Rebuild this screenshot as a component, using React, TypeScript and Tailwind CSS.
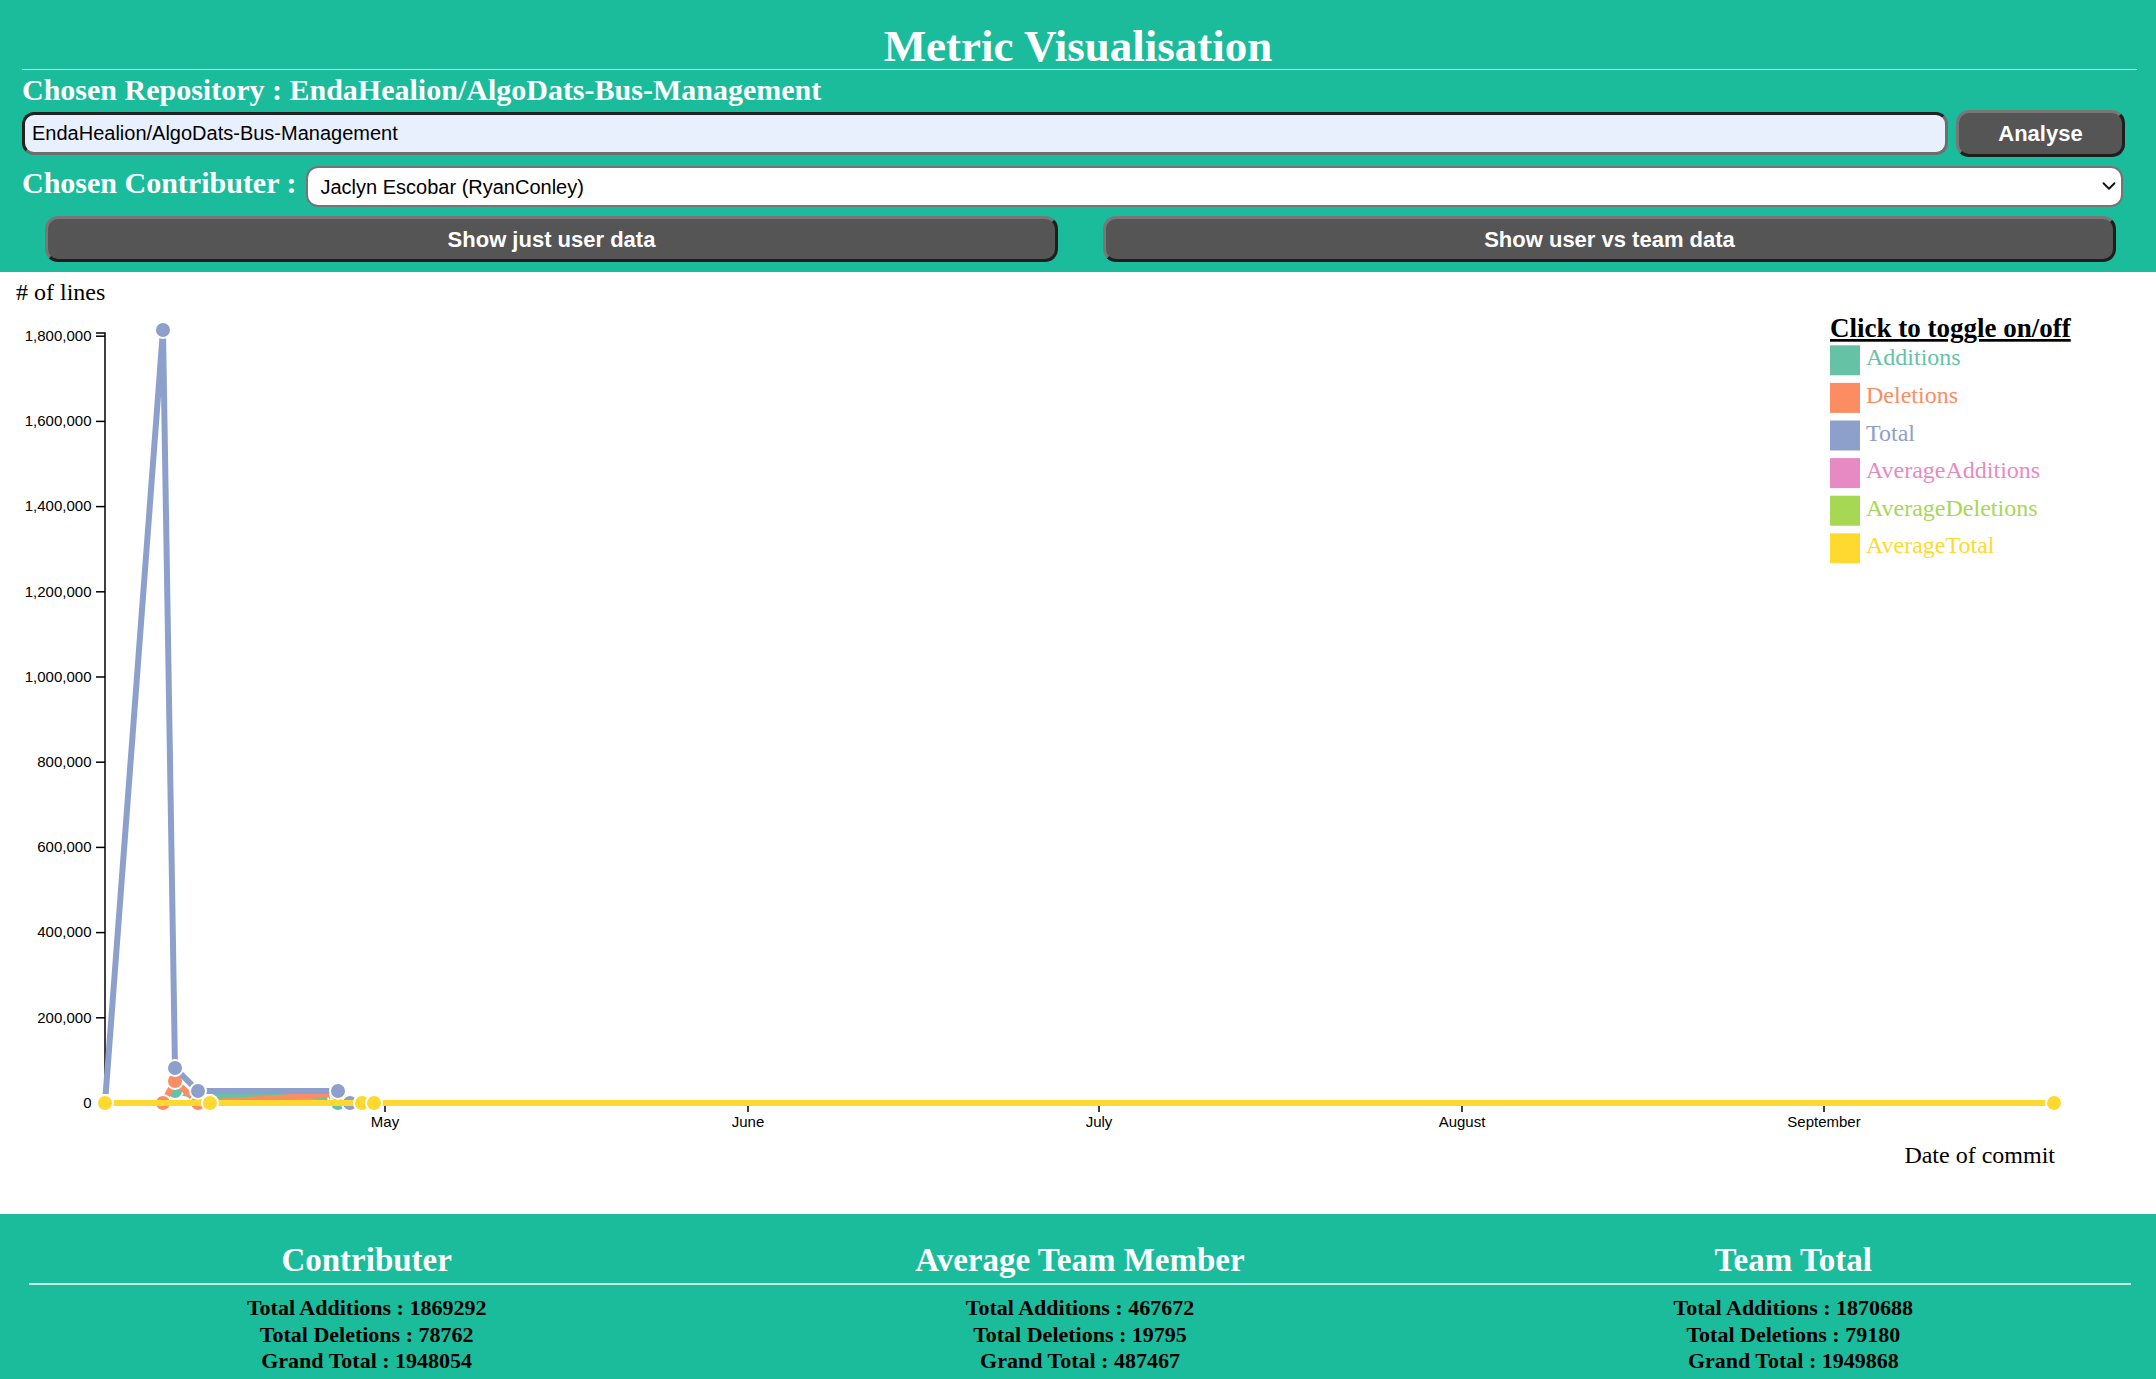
import { ChevronDown } from 'lucide-react';

type Pt = [number, number];

const Y0 = 831;
const STEP = 85.2;

const yTicks = ['0', '200,000', '400,000', '600,000', '800,000', '1,000,000', '1,200,000', '1,400,000', '1,600,000', '1,800,000'];

const xTicks: { label: string; x: number }[] = [
  { label: 'May', x: 385 },
  { label: 'June', x: 748 },
  { label: 'July', x: 1099 },
  { label: 'August', x: 1462 },
  { label: 'September', x: 1824 },
];

const avgPts: Pt[] = [
  [105, Y0],
  [210, Y0],
  [362, Y0],
  [374, Y0],
  [2054, Y0],
];

const series: { name: string; color: string; points: Pt[] }[] = [
  {
    name: 'Additions',
    color: '#66c2a5',
    points: [[105, Y0], [163, Y0], [175, 819], [198, 824], [336, 825], [338, Y0], [350, Y0]],
  },
  {
    name: 'Deletions',
    color: '#fc8d62',
    points: [[105, Y0], [163, Y0], [175, 809], [198, Y0], [338, 822], [350, Y0]],
  },
  {
    name: 'Total',
    color: '#8da0cb',
    points: [[105, Y0], [163, 58], [175, 796], [198, 819], [338, 819], [350, Y0]],
  },
  { name: 'AverageAdditions', color: '#e78ac3', points: avgPts },
  { name: 'AverageDeletions', color: '#a6d854', points: avgPts },
  { name: 'AverageTotal', color: '#ffd92f', points: avgPts },
];

const stats = [
  { title: 'Contributer', add: 1869292, del: 78762, total: 1948054 },
  { title: 'Average Team Member', add: 467672, del: 19795, total: 487467 },
  { title: 'Team Total', add: 1870688, del: 79180, total: 1949868 },
];

function Chart() {
  return (
    <svg width="2156" height="942" viewBox="0 0 2156 942" className="block">
      <text x="16" y="28" fontSize="24" fontFamily="'Liberation Serif', serif" fill="#000">
        # of lines
      </text>

      {/* y axis */}
      <g fontFamily="'Liberation Sans', Arial, sans-serif" fontSize="15" fill="#000">
        <path d={`M96,61 H105 V${Y0} H96`} fill="none" stroke="#000" strokeWidth="1.5" />
        {yTicks.map((t, i) => {
          const y = Y0 - i * STEP;
          return (
            <g key={t}>
              <line x1="96" x2="105" y1={y} y2={y} stroke="#000" strokeWidth="1.5" />
              <text x="91.5" y={y} dy="0.32em" textAnchor="end">
                {t}
              </text>
            </g>
          );
        })}
      </g>

      {/* x axis */}
      <g fontFamily="'Liberation Sans', Arial, sans-serif" fontSize="15" fill="#000">
        <path d={`M105,${Y0 + 9} V${Y0} H2054 V${Y0 + 9}`} fill="none" stroke="#000" strokeWidth="1.5" />
        {xTicks.map((t) => (
          <g key={t.label}>
            <line x1={t.x} x2={t.x} y1={Y0} y2={Y0 + 9} stroke="#000" strokeWidth="1.5" />
            <text x={t.x} y={Y0 + 13.5} dy="0.71em" textAnchor="middle">
              {t.label}
            </text>
          </g>
        ))}
      </g>
      <text x="2055" y="891" fontSize="24" fontFamily="'Liberation Serif', serif" textAnchor="end" fill="#000">
        Date of commit
      </text>

      {/* lines */}
      {series.map((s) => (
        <g key={s.name}>
          <polyline
            points={s.points.map((p) => p.join(',')).join(' ')}
            fill="none"
            stroke={s.color}
            strokeWidth="6"
          />
          {s.points.map((p, i) => (
            <circle key={i} cx={p[0]} cy={p[1]} r="8" fill={s.color} stroke="#fff" strokeWidth="2" />
          ))}
        </g>
      ))}

      {/* legend */}
      <g fontFamily="'Liberation Serif', serif">
        <text x="1830" y="65" fontSize="27" fontWeight="bold" textDecoration="underline" fill="#000">
          Click to toggle on/off
        </text>
        {series.map((s, i) => {
          const top = 73.3 + i * 37.6;
          return (
            <g key={s.name} className="cursor-pointer">
              <rect x="1830" y={top} width="30" height="30" fill={s.color} />
              <text x="1866" y={top + 20} fontSize="24" fill={s.color}>
                {s.name}
              </text>
            </g>
          );
        })}
      </g>
    </svg>
  );
}

export default function App() {
  return (
    <div className="min-h-screen bg-white font-['Liberation_Serif',serif]">
      <header className="bg-[#1abc9c] px-[22px] pb-[10px]">
        <h1 className="pt-[23px] text-center text-[45px] leading-[46px] font-bold text-white">Metric Visualisation</h1>
        <div className="mr-[-3px] h-px bg-[#d2f2ea]" />
        <h3 className="mt-[3px] text-[30px] leading-[34px] font-bold text-white">
          Chosen Repository : EndaHealion/AlgoDats-Bus-Management
        </h3>

        <div className="mt-[3px] mr-[9px] flex h-[47px] items-center gap-[8px]">
          <input
            type="text"
            readOnly
            value="EndaHealion/AlgoDats-Bus-Management"
            className="h-[43px] min-w-0 flex-1 rounded-[12px] border-[3px] border-t-[#222] border-l-[#222] border-r-[#6e6e6e] border-b-[#6e6e6e] bg-[#e8f0fe] px-[7px] font-['Liberation_Sans',sans-serif] text-[20px] text-black outline-none"
          />
          <button className="h-[47px] w-[169px] rounded-[13px] border-[3px] border-t-[#777] border-l-[#777] border-r-[#1e1e1e] border-b-[#1e1e1e] bg-[#555] font-['Liberation_Sans',sans-serif] text-[22px] font-bold text-white">
            Analyse
          </button>
        </div>

        <div className="mt-[9px] mr-[11px] flex h-[41px] items-center gap-[10px]">
          <label className="relative top-[-4px] shrink-0 text-[30px] leading-[34px] font-bold text-white">Chosen Contributer :</label>
          <div className="relative h-[41px] flex-1">
            <select className="h-full w-full appearance-none rounded-[12px] border-2 border-[#757575] bg-white pl-[12px] font-['Liberation_Sans',sans-serif] text-[20px] text-black outline-none">
              <option>Jaclyn Escobar (RyanConley)</option>
            </select>
            <ChevronDown className="pointer-events-none absolute top-[9px] right-[3px] h-[22px] w-[22px] text-[#111]" strokeWidth={2} />
          </div>
        </div>

        <div className="mt-[9px] flex gap-[45px] pl-[23px] pr-[18px]">
          <button className="h-[46px] flex-1 rounded-[13px] border-[3px] border-t-[#777] border-l-[#777] border-r-[#1e1e1e] border-b-[#1e1e1e] bg-[#555] font-['Liberation_Sans',sans-serif] text-[22px] font-bold text-white">
            Show just user data
          </button>
          <button className="h-[46px] flex-1 rounded-[13px] border-[3px] border-t-[#777] border-l-[#777] border-r-[#1e1e1e] border-b-[#1e1e1e] bg-[#555] font-['Liberation_Sans',sans-serif] text-[22px] font-bold text-white">
            Show user vs team data
          </button>
        </div>
      </header>

      <section className="h-[942px] bg-white">
        <Chart />
      </section>

      <footer className="bg-[#1abc9c] pt-[27px] pb-[20px] pl-[10px] pr-[6px]">
        <div className="grid grid-cols-3">
          {stats.map((s) => (
            <h2 key={s.title} className="text-center text-[33px] leading-[38px] font-bold text-white">
              {s.title}
            </h2>
          ))}
        </div>
        <div className="mt-[4px] ml-[19px] mr-[19px] h-[2px] bg-[#c4ece2]" />
        <div className="mt-[10px] grid grid-cols-3">
          {stats.map((s) => (
            <div key={s.title} className="text-center text-[22px] leading-[26.5px] font-bold text-black">
              <p>Total Additions : {s.add}</p>
              <p>Total Deletions : {s.del}</p>
              <p>Grand Total : {s.total}</p>
            </div>
          ))}
        </div>
      </footer>
    </div>
  );
}
